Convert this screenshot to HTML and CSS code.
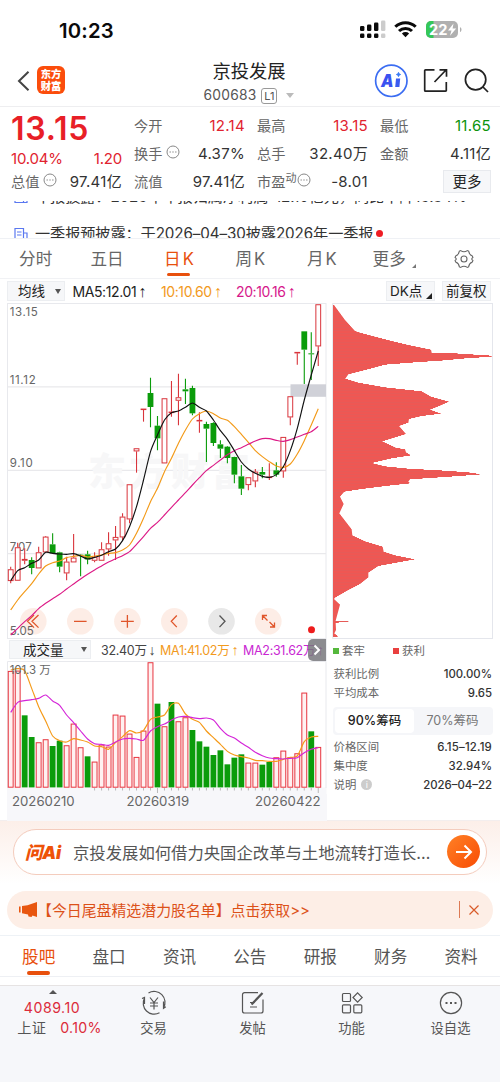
FILE: index.html
```html
<!DOCTYPE html>
<html lang="zh-CN">
<head>
<meta charset="utf-8">
<title>京投发展 600683</title>
<link rel="stylesheet" href="styles.css">
</head>
<body>
<header class="status">
  <span class="clock">10:23</span>
  <svg class="status-icons" width="104" height="20" viewBox="358 19 104 20">
    <g fill="#0a0a0a"><rect x="360" y="26" width="4.4" height="5" rx="1.3"/><rect x="367" y="24.5" width="4.4" height="6.5" rx="1.3"/><rect x="374" y="22.5" width="4.4" height="8.5" rx="1.3"/><rect x="360" y="33.5" width="4.4" height="4.6" rx="1.3"/><rect x="367" y="33.5" width="4.4" height="4.6" rx="1.3"/><rect x="374" y="33.5" width="4.4" height="4.6" rx="1.3"/></g>
    <g fill="#ccc"><rect x="381" y="20.5" width="4.4" height="10.5" rx="1.3"/><rect x="381" y="33.5" width="4.4" height="4.6" rx="1.3"/></g>
    <g fill="none" stroke="#0a0a0a" stroke-width="3"><path d="M395.3 26.8a14.6 14.6 0 0 1 20.4 0"/><path d="M399 31a9.4 9.4 0 0 1 13 0"/></g>
    <path d="M405.5 37.2l-3.6-3.7a5.2 5.2 0 0 1 7.2 0z" fill="#0a0a0a"/>
    <path d="M431 21h22a5 5 0 0 1 5 5v7a5 5 0 0 1-5 5h-22a5 5 0 0 1-5-5v-7a5 5 0 0 1 5-5z" fill="#b0b0b0"/>
    <path d="M431 21h2.5v17H431a5 5 0 0 1-5-5v-7a5 5 0 0 1 5-5z" fill="#34c759"/>
    <path d="M460 27.2c2 .7 2 4 0 4.8z" fill="#b0b0b0"/>
    <text x="429" y="34.8" class="battery-text" textLength="18.500" lengthAdjust="spacingAndGlyphs">22</text>
    <path d="M453.5 23.5l-5.5 7h3.5l-1.5 5.3 6.2-7.4h-3.6z" fill="#fff"/>
  </svg>
</header>

<nav class="nav">
  <svg class="back" width="14" height="22" viewBox="0 0 14 22"><path d="M11.5 1.8L2 11l9.500 9.200" fill="none" stroke="#444" stroke-width="2"/></svg>
  <div class="brand"><span>东方</span><span>财富</span></div>
  <div class="title">
    <h1>京投发展</h1>
    <div class="code"><span>600683</span><b>L1</b><i></i></div>
  </div>
  <svg class="nav-icons" width="120" height="40" viewBox="372 61 120 40">
    <circle cx="391.300" cy="80.800" r="15.700" fill="#fff" stroke="#3b6df2" stroke-width="1.700"/>
    <text x="381" y="87" class="ai-text" textLength="12.500" lengthAdjust="spacingAndGlyphs">A</text>
    <path d="M396 78.500h4.200l-.8 8.500h-4.200z" fill="#3a5cf0"/>
    <path d="M398.500 72.300l.7 1.500 1.500.7-1.500.7-.7 1.500-.7-1.500-1.500-.7 1.500-.7z" fill="#3a7cf6" stroke="#3a7cf6" stroke-width=".8"/>
    <g fill="none" stroke="#222" stroke-width="1.700"><path d="M434.500 69.800h-9a.8.8 0 0 0-.8.8v19.800a.8.8 0 0 0 .8.800h20a.8.8 0 0 0 .8-.8V82M434.500 82l11.500-12M439.500 69.800h7v7"/>
    <circle cx="475.600" cy="79.600" r="10.200"/><path d="M483 87l5 5"/></g>
  </svg>
</nav>

<section class="quote">
  <div class="col">
    <div class="price">13.15</div>
    <div class="row change up"><span>10.04%</span><span>1.20</span></div>
    <div class="row"><label>总值<svg class="dots" viewBox="0 0 14 14"><circle cx="7" cy="7" r="6"/><path d="M3.500 7h1.400M6.300 7h1.400M9.100 7h1.400"/></svg></label><span class="amount">97.41亿</span></div>
  </div>
  <div class="col">
    <div class="row"><label>今开</label><span class="up">12.14</span></div>
    <div class="row"><label>换手<svg class="dots" viewBox="0 0 14 14"><circle cx="7" cy="7" r="6"/><path d="M3.500 7h1.400M6.300 7h1.400M9.100 7h1.400"/></svg></label><span>4.37%</span></div>
    <div class="row"><label>流值</label><span class="amount">97.41亿</span></div>
  </div>
  <div class="col">
    <div class="row"><label>最高</label><span class="up">13.15</span></div>
    <div class="row"><label>总手</label><span class="amount">32.40万</span></div>
    <div class="row"><label>市盈<sup>动</sup><svg class="dots tight" viewBox="0 0 14 14"><circle cx="7" cy="7" r="6"/><path d="M3.500 7h1.400M6.300 7h1.400M9.100 7h1.400"/></svg></label><span>-8.01</span></div>
  </div>
  <div class="col">
    <div class="row"><label>最低</label><span class="down">11.65</span></div>
    <div class="row"><label>金额</label><span class="amount">4.11亿</span></div>
    <div class="row end"><button class="more">更多</button></div>
  </div>
</section>

<section class="news">
  <div class="news-track">
    <div class="news-item"><svg width="14" height="14" viewBox="0 0 14 14"><path d="M1 1.500h8.500v11H1zM9.500 6H13v6.500H1M3 5h4.500M3 8h4.500"/></svg><span>年报披露：2025年年报归属净利润-12.10亿元，同比下降15.34%</span></div>
    <div class="news-item"><svg width="14" height="14" viewBox="0 0 14 14"><path d="M1 1.500h8.500v11H1zM9.500 6H13v6.500H1M3 5h4.500M3 8h4.500"/></svg><span>一季报预披露：于2026–04–30披露2026年一季报</span><i></i></div>
  </div>
</section>

<nav class="periods">
  <span>分时</span><span>五日</span><span class="k on">日K</span><span class="k">周K</span><span class="k">月K</span><span class="drop">更多</span>
  <span><svg width="20" height="20" viewBox="0 0 20 20"><path d="M6.700 1.600Q10 3.900 13.300 1.600L14.600 2.100Q15.100 5.700 18.300 6.900L18.900 8.500Q16.600 10 18.900 11.500L18.300 13.100Q15.100 14.300 14.600 17.900L13.300 18.400Q10 16.100 6.700 18.400L5.400 17.900Q4.900 14.300 1.700 13.100L1.100 11.500Q3.400 10 1.100 8.500L1.700 6.900Q4.900 5.700 5.400 2.100Z"/><circle cx="10" cy="10" r="3"/></svg></span>
</nav>

<div class="indicators">
  <span class="select ma">均线<i></i></span>
  <span class="v5">MA5:12.01<em>↑</em></span><span class="v10">10:10.60<em>↑</em></span><span class="v20">20:10.16<em>↑</em></span>
  <span class="chip dk">DK点<i></i></span><span class="chip">前复权</span>
</div>

<main class="charts">
  <div class="left">
    <svg id="kline" width="320" height="337" viewBox="7 302 320 337">
      <rect x="7.500" y="303.500" width="318.500" height="335" fill="#fff" stroke="#e8e9ed"/>
      <path d="M8 386.800h318M8 470.300h318M8 553.700h318" stroke="#e9e9ec" stroke-width="1.200"/>
      <text x="88" y="485" class="watermark" textLength="162">东方财富</text>
      <rect x="290.500" y="384.300" width="35.500" height="12.500" fill="#d0d1d8"/>
      <g fill="#fdeae2" fill-opacity=".85"><circle cx="33.300" cy="621.300" r="13.300"/><circle cx="80.300" cy="621.300" r="13.300"/><circle cx="127.400" cy="621.300" r="13.300"/><circle cx="174.300" cy="621.300" r="13.300"/><circle cx="268.300" cy="621.300" r="13.300"/></g>
      <circle cx="221.500" cy="621.300" r="13.300" fill="#e8e8e8"/>
      <g class="axis"><text x="9.700" y="316" textLength="28">13.15</text><text x="9.700" y="383.500" textLength="26">11.12</text><text x="9.700" y="467" textLength="23">9.10</text><text x="9.700" y="551" textLength="22">7.07</text><text x="9.700" y="634.500" textLength="24">5.05</text></g>
      <g id="candles"></g>
      <g fill="none" stroke="#e0562b" stroke-width="1.300"><path d="M34 615l-6.500 6.300 6.500 6.300M38.500 615l-6.500 6.300 6.500 6.300M74 621.300h12.600M121 621.300h12.800M127.400 615v12.800M176.800 615.500l-5.500 5.800 5.500 5.800M262.500 620v-4.500h4.500M262.500 615.500l5 5M274.500 622.500v4.500H270M274.500 627l-5-5"/></g>
      <path d="M219.500 615.500l5.500 5.800-5.500 5.800" fill="none" stroke="#555" stroke-width="1.300"/>
      <g id="averages"></g>
      <circle cx="311.500" cy="629.700" r="3.500" fill="#ee1c1c"/>
    </svg>
    <div class="volume-head">
      <span class="select vol">成交量<i></i></span><span class="now">32.40万<em>↓</em></span><span class="m1">MA1:41.02万<em>↑</em></span><span class="m2">MA2:31.62万<em>↑</em></span>
      <b class="handle"><svg width="8" height="12" viewBox="0 0 8 12"><path d="M1.500 1.500L6 6l-4.500 4.500" fill="none" stroke="#fff" stroke-width="2"/></svg></b>
    </div>
    <svg id="volume" width="320" height="133" viewBox="7 661 320 133">
      <rect x="7" y="787.500" width="319.500" height="8" fill="#f7f7fa"/>
      <path d="M7.500 788V661.500H326V788" fill="none" stroke="#e8e9ed"/>
      <g id="bars"></g>
      <g class="axis"><text x="9.700" y="673.500" textLength="41">101.3 万</text></g>
    </svg>
    <div class="dates"><span>20260210</span><span>20260319</span><span>20260422</span></div>
  </div>
  <aside class="right">
    <svg id="profile" width="161" height="337" viewBox="332 302 161 337"><rect x="332.700" y="303.500" width="159.800" height="335" fill="#fff" stroke="#e4e6ec"/></svg>
    <div class="legend"><span class="g">套牢</span><span class="r">获利</span></div>
    <dl class="stats"><dt>获利比例</dt><dd>100.00%</dd><dt>平均成本</dt><dd>9.65</dd></dl>
    <div class="switch"><span class="on">90%筹码</span><span>70%筹码</span></div>
    <dl class="stats low"><dt>价格区间</dt><dd class="range">6.15–12.19</dd><dt>集中度</dt><dd>32.94%</dd><dt>说明<i>i</i></dt><dd>2026–04–22</dd></dl>
  </aside>
</main>

<section class="ask">
  <div class="ask-pill">
    <span class="ask-logo">问Ai</span><span class="ask-text">京投发展如何借力央国企改革与土地流转打造长…</span>
    <b><svg width="18" height="16" viewBox="0 0 18 16"><path d="M1 8h14.500M9.500 1.500L16 8l-6.500 6.500" fill="none" stroke="#fff" stroke-width="2"/></svg></b>
  </div>
</section>
<div class="promo">
  <svg width="19" height="16" viewBox="0 0 19 16" fill="#e8560f"><path d="M0 4.500h1.600v6H0zM3 4l5.500-.8L18 0v15l-4.500-1.500-1 1.500-3-.5-.5-2L3 11.300z"/></svg>
  <span>【今日尾盘精选潜力股名单】点击获取&gt;&gt;</span>
  <i></i>
  <svg class="close" width="10" height="10" viewBox="0 0 10 10"><path d="M.5.5l9 9M9.500.5l-9 9" stroke="#d85a28" stroke-width="1.200"/></svg>
</div>

<nav class="sections"><span class="on">股吧</span><span>盘口</span><span>资讯</span><span>公告</span><span>研报</span><span>财务</span><span>资料</span></nav>

<footer class="tabbar">
  <div class="index"><i></i><span>4089.10</span><p><em>上证</em>0.10%</p></div>
  <div><svg viewBox="0 0 26 26"><path d="M7.500 2.900A11 11 0 0 1 22.500 18M18.500 22.800A11 11 0 0 1 3.500 8M3.500 14V7.500L1 8.500M22.500 11.500v6.800l2.300-1.500M9 7.500l4 5 4-5M13 12.500v7M9 13h8M9 16h8"/></svg><span>交易</span></div>
  <div><svg viewBox="0 0 26 26"><path d="M18 2.700H4.500a2 2 0 0 0-2 2V21a2 2 0 0 0 2 2H21a2 2 0 0 0 2-2V9.500M10 12.500h4.500M10 17h7"/><path d="M11.500 14.500L22.500 3" stroke-width="2.300"/></svg><span>发帖</span></div>
  <div><svg viewBox="0 0 26 26"><rect x="3.500" y="3.500" width="8" height="8" rx="1"/><rect x="3.500" y="14.800" width="8" height="8" rx="1"/><rect x="14.800" y="14.800" width="8" height="8" rx="1"/><path d="M18.600 2.800l4.600 4.700-4.600 4.700L14 7.500z"/></svg><span>功能</span></div>
  <div><svg viewBox="0 0 26 26"><circle cx="13" cy="13" r="10.600"/><path d="M7.500 13h2M12 13h2M16.500 13h2" stroke-width="2"/></svg><span>设自选</span></div>
</footer>
<script src="charts.js"></script>
</body>
</html>
```
FILE: styles.css
```css
* { box-sizing: border-box; }
body { margin: 0; width: 500px; height: 1082px; overflow: hidden; background: #fff; color: #333; font-family: Inter, "Noto Sans CJK SC", sans-serif; }
h1, p, dl, dd { margin: 0; }
i, em { font-style: normal; }
svg { display: block; flex: none; }
span, label { white-space: nowrap; }
.up { color: #e1232f; }
.down { color: #0c930c; }

.status { height: 60px; display: flex; justify-content: space-between; padding: 19px 38px 0 59px; }
.clock { font-size: 20.300px; font-weight: 600; line-height: 23px; color: #0a0a0a; letter-spacing: .2px; }
.battery-text { font: 700 14.500px Inter, sans-serif; fill: #fff; }

.nav { height: 47px; border-bottom: 1.500px solid #eeeef0; display: flex; padding-left: 17px; }
.back { margin-top: 10px; }
.brand { width: 28px; height: 28px; margin: 6px 0 0 6px; border-radius: 6px; background: #fb4d0c; color: #fff; font: 900 10.300px/12px "Noto Sans CJK SC", sans-serif; display: flex; flex-direction: column; align-items: center; justify-content: center; }
.title { width: 140px; margin-left: 114px; text-align: center; }
.title h1 { font-size: 18.300px; font-weight: 400; line-height: 22px; color: #222; }
.code { display: flex; align-items: center; justify-content: center; margin-top: 5px; font-size: 13.800px; line-height: 17px; color: #555; letter-spacing: .2px; }
.code b { width: 16px; height: 16px; margin-left: 5px; border: 1px solid #999; border-radius: 3px; font-size: 11px; line-height: 14px; font-weight: 400; letter-spacing: 0; }
.code i { margin-left: 9px; border: 4px solid transparent; border-top: 5px solid #bbb; border-bottom: 0; }
.nav-icons { margin-left: 53px; margin-top: 1px; }
.ai-text { font: italic 900 17px "Inter", sans-serif; fill: #3a52f0; }

.quote { height: 93px; display: grid; grid-template-columns: repeat(4, 111px); column-gap: 12px; padding: 5px 0 0 11px; }
.row { display: flex; justify-content: space-between; height: 28px; align-items: center; font-size: 15px; letter-spacing: .3px; line-height: 20px; white-space: nowrap; }
.row label { font-size: 14.200px; color: #666; display: flex; align-items: center; letter-spacing: 0; }
.price { height: 33px; font-size: 32px; font-weight: 600; line-height: 33px; color: #e81f27; letter-spacing: .8px; }
.change { height: 23px; padding-top: 4px; letter-spacing: -.2px; }
.dots { width: 14px; height: 14px; margin: -5px 0 0 4px; fill: none; stroke: #888; }
.dots.tight { margin-left: 1px; }
.row sup { font-size: 11px; margin-top: -9px; line-height: 12px; vertical-align: baseline; }
.more { width: 48px; height: 23px; padding: 0; border: 1px solid #e8eaee; background: #f6f7f9; font: 14.500px/20px "Noto Sans CJK SC", sans-serif; color: #222; }
.row.end { justify-content: flex-end; margin-top: -1px; }

.news { height: 38.500px; overflow: hidden; border-bottom: 1px solid #eff1f5; padding-top: 1px; }
.news-track { overflow: hidden; height: 37px; }
.news-item { height: 31px; margin-top: -20px; display: flex; align-items: center; padding-left: 14px; font-size: 15.200px; line-height: 22px; color: #333; letter-spacing: -.1px; }
.news-item + .news-item { margin-top: 5px; padding-top: 2px; }
.news-item svg { fill: none; stroke: #5a78f0; stroke-width: 1.200; margin-right: 7px; }
.news-item i { width: 7px; height: 7px; border-radius: 50%; background: #ee1c24; margin-left: 3px; }

.periods { height: 40.500px; display: grid; grid-template-columns: repeat(7, 71.400px); border-bottom: 1px solid #f1f2f5; }
.periods span { position: relative; font-size: 16.600px; line-height: 41px; height: 39.500px; text-align: center; color: #666; }
.periods .k { letter-spacing: 2px; padding-left: 3px; }
.periods .on { color: #e8500d; }
.periods .on::after, .sections .on::after { content: ""; position: absolute; left: 50%; margin-left: -11.500px; bottom: 2px; width: 23px; height: 3.500px; border-radius: 2px; background: #e8500d; }
.periods .drop { padding-right: 7px; }
.periods .drop::after { content: ""; position: absolute; right: 12px; bottom: 10px; border: 2.500px solid transparent; border-right-color: #777; border-bottom-color: #777; }
.periods svg { margin: 10px auto 0; fill: none; stroke: #666; stroke-width: 1.100; }

.indicators { height: 22px; padding: 2px 9px 0 7px; display: flex; align-items: center; font-size: 14px; letter-spacing: -.4px; }
.indicators em, .volume-head em { font-family: "Liberation Sans", sans-serif; font-size: 1.15em; line-height: 1; margin-left: 2px; }
.select, .chip { height: 20px; border: 1px solid #eceef1; background: #f6f7f9; color: #222; font-size: 13.500px; line-height: 18px; display: flex; align-items: center; letter-spacing: 0; }
.select i { border: 3px solid transparent; border-top: 5px solid #555; border-bottom: 0; margin-left: auto; }
.ma { width: 58px; padding: 0 3px 0 10px; }
.v5 { margin-left: 7.500px; width: 88.500px; color: #222; }
.v10 { width: 75px; color: #f29a1d; }
.v20 { color: #d6188b; }
.dk { margin-left: auto; margin-right: 7px; padding: 0 1px 0 3px; width: 49px; }
.dk i { align-self: flex-end; margin: 0 1px 1px auto; border: 3px solid transparent; border-right-color: #222; border-bottom-color: #222; }
.chip:last-child { width: 49px; padding-left: 3px; }

.charts { display: flex; height: 518px; margin-top: .5px; }
.left { width: 319.500px; margin-left: 7px; }
.left > svg { width: 320px; }
.axis text { font: 11.500px Inter, "Noto Sans CJK SC", sans-serif; fill: #666; }
.watermark { font: 900 38px "Noto Sans CJK SC", sans-serif; fill: #f7f7f8; }
.volume-head { height: 22px; display: flex; align-items: center; font-size: 12.500px; letter-spacing: -.3px; padding-left: 2px; position: relative; border-right: 1px solid #eceef2; }
.vol { width: 82px; height: 19px; padding: 0 3px 0 13px; }
.now { margin-left: 10px; width: 59px; color: #444; }
.m1 { width: 83px; color: #f29a1d; }
.m2 { color: #c928d2; }
.handle { position: absolute; right: 0; top: 0; width: 18px; height: 22px; border-radius: 5px 0 0 5px; background: rgba(120,120,124,.85); display: flex; align-items: center; justify-content: center; }
.dates { height: 27px; background: #f7f7fa; display: flex; justify-content: space-between; padding: 0 6px 0 5px; font-size: 13.200px; line-height: 15px; color: #666; }
.dates span:nth-child(2) { margin-right: 14px; }
.right { width: 161px; margin-left: 5.500px; font-size: 11.400px; color: #666; }
.legend { display: flex; height: 23px; align-items: center; padding: 1px 0 0 1px; line-height: 18px; }
.legend span { width: 60px; display: flex; align-items: center; }
.legend span::before { content: ""; width: 6px; height: 6px; margin-right: 3px; background: #55b83c; }
.legend .r::before { background: #e9403f; }
.stats { display: grid; grid-template-columns: 1fr auto; grid-auto-rows: 19px; align-items: center; padding: 3px 1px 0 1.500px; line-height: 17px; height: 43px; }
.stats dd { font-weight: 500; color: #333; text-align: right; }
.stats .range { letter-spacing: .2px; }
.stats.low { padding-top: 3.500px; }
.stats i { display: inline-block; width: 11px; height: 11px; border-radius: 50%; background: #ccc; color: #fff; font-size: 9px; line-height: 11px; text-align: center; margin-left: 5px; vertical-align: 1px; }
.switch { height: 28px; margin: 2px 0 0 1px; border-radius: 4px; background: #f5f6f9; display: grid; grid-template-columns: 79px 1fr; padding: 2px; font-size: 12.500px; line-height: 24px; text-align: center; color: #777; }
.switch .on { background: #fff; color: #222; border-radius: 4px; font-weight: 500; }

.ask { height: 71px; border-top: 1.500px solid #f3eeee; padding: 8px 13px 0; background: linear-gradient(#fcefe9, #fff 90%); }
.ask-pill { height: 46.500px; border: 1.300px solid #f4ccbd; border-radius: 24px; background: #fff; display: flex; align-items: center; padding: 0 6px 0 11px; }
.ask-logo { width: 48px; font: italic 900 17.500px "Inter", "Noto Sans CJK SC", sans-serif; color: #ee5208; letter-spacing: -.2px; }
.ask-text { font-size: 16.350px; color: #555; }
.ask-pill b { margin-left: auto; width: 33px; height: 33px; border-radius: 50%; background: linear-gradient(135deg, #ff8126, #f84c04); display: flex; align-items: center; justify-content: center; }
.promo { height: 38px; margin: 0 7px; border-radius: 19px; background: #fdeee6; display: flex; align-items: center; padding: 0 14px 0 12px; font-size: 14.900px; color: #dc5119; }
.promo > span { margin-left: -1px; }
.promo i { width: 1px; height: 17px; background: #dd7a54; margin-left: auto; }
.promo .close { margin-left: 9px; }
.sections { height: 42px; margin-top: 6px; padding: 0 3.500px; border-top: 1px solid #eef2f6; border-bottom: 1px solid #eef0f4; display: grid; grid-template-columns: repeat(7, 70.400px); }
.sections span { position: relative; text-align: center; font-size: 16.600px; line-height: 42px; color: #555; height: 41px; }
.sections .on { color: #e8500d; }
.tabbar { height: 97px; margin-top: 8px; border-top: 1.500px solid #e6e3e3; background: #f6f7fa; display: grid; grid-template-columns: repeat(5, 99px); padding-left: 5px; color: #555; }
.tabbar div { display: flex; flex-direction: column; align-items: center; font-size: 13.300px; line-height: 18px; }
.tabbar svg { width: 26px; height: 26px; margin-top: 4.500px; margin-bottom: 3px; fill: none; stroke: #555; stroke-width: 1.200; }
.tabbar .index { font-size: 14.200px; color: #dc2b3b; letter-spacing: .3px; }
.index > i { border: 4px solid transparent; border-bottom: 4px solid #555; border-top: 0; margin: 4px 4px 4.500px 0; }
.index > span { margin-right: 5px; line-height: 19px; letter-spacing: .5px; }
.index p { line-height: 21px; margin-left: 10px; white-space: nowrap; }
.index em { color: #555; margin-right: 14px; }
```
FILE: charts.js
```js
const NS = 'http://www.w3.org/2000/svg';
const add = (id, tag, attrs) => {
  const el = document.createElementNS(NS, tag);
  for (const k in attrs) el.setAttribute(k, attrs[k]);
  document.getElementById(id).appendChild(el);
};
const x = i => 10.7 + i * 6.99;
const RED = '#d9353c', GREEN = '#0b9c0b';

// [kind, high, bodyTop, bodyBottom, low] in thirds of a pixel below the chart top
const candles = [
['r',800,808,843,850],['r',728,742,842,842],['r',745,777,782,793],['g',772,780,804,823],['r',740,757,805,805],['r',708,710,757,757],['g',700,733,760,760],['g',755,757,800,817],['r',770,785,820,841],['r',702,773,787,787],['g',763,764,767,829],['g',752,763,778,793],['r',757,771,782,787],['r',727,748,782,782],['r',697,730,748,767],['r',678,711,721,780],['r',640,650,712,720],['r',553,553,658,670],['r',445,445,454,518],['r',326,326,329,365],['g',233,279,321,382],['g',348,377,415,451],['r',295,295,490,490],['r',243,335,339,350],['r',221,292,302,376],['g',236,268,274,312],['g',257,264,340,346],['r',337,360,364,398],['g',365,372,386,486],['g',367,369,429,438],['g',421,433,446,474],['g',438,440,474,490],['g',470,471,524,550],['g',495,529,566,585],['r',532,532,555,571],['r',507,515,544,562],['g',501,516,524,535],['r',490,530,534,540],['g',487,511,524,530],['r',411,411,514,533],['r',289,289,352,376],['r',156,156,160,194],['g',94,94,149,252],['g',97,160,163,240],['r',13,13,139,198]];
const py = v => 300 + v / 3;
candles.forEach(([k, h, t, b, l], i) => {
  const cx = x(i), color = k === 'r' ? RED : GREEN;
  add('candles', 'path', { d: `M${cx} ${py(h)}V${py(t)}M${cx} ${py(b)}V${py(l)}`, stroke: color, 'stroke-width': 1.1 });
  add('candles', 'rect', k === 'r'
    ? { x: cx - 2.4, y: py(t) + .4, width: 4.8, height: Math.max(.5, (b - t) / 3 - .8), fill: '#fff', stroke: RED, 'stroke-width': 1 }
    : { x: cx - 2.9, y: py(t), width: 5.8, height: Math.max(1, (b - t) / 3), fill: GREEN });
});

const line = (id, values, y, stroke) => {
  const p = values.map((v, i) => [x(i), y(v)]);
  let d = `M${p[0]}`;
  for (let i = 1; i < p.length; i++) {
    const a = p[Math.max(0, i - 2)], b = p[i - 1], c = p[i], e = p[Math.min(p.length - 1, i + 1)];
    d += `C${b[0] + (c[0] - a[0]) / 8} ${b[1] + (c[1] - a[1]) / 8} ${c[0] - (e[0] - b[0]) / 8} ${c[1] - (e[1] - b[1]) / 8} ${c}`;
  }
  add(id, 'path', { d, stroke, fill: 'none', 'stroke-width': 1.15 });
};
line('averages', [930,900,875,851,822,798,788,783,773,769,766,771,768,765,760,758,750,735,700,655,605,565,515,475,430,390,357,341,333,341,354,361,380,403,427,452,470,485,498,502,492,462,422,375,326], py, '#f39a18');
line('averages', [1005,985,965,947,926,910,896,883,867,852,837,823,810,798,786,776,767,755,733,710,685,667,645,622,600,578,555,533,512,496,480,464,452,443,433,423,416,416,421,424,419,411,403,395,379], py, '#dc1a86');
line('averages', [842,812,803,790,780,757,760,762,763,761,768,777,772,766,755,747,722,680,620,540,455,405,360,338,333,322,309,322,333,360,392,418,452,486,507,520,529,532,524,500,452,385,300,225,153], py, '#111');

const vy = v => 640 + v / 3;
const volumes = [93,92,226,291,307,298,318,302,316,251,322,349,365,314,320,224,227,281,351,272,67,191,259,186,244,232,270,304,320,345,331,373,353,343,368,368,374,366,352,332,352,340,158,274,321];
const falling = new Set([2,3,6,7,11,21,23,26,27,28,29,30,31,32,33,36,37,43]);
volumes.forEach((v, i) => {
  const down = falling.has(i), o = down ? 2.9 : 2.45;
  add('bars', 'rect', { x: x(i) - o, y: vy(v) + (down ? 0 : .4), width: o * 2, height: 787.4 - vy(v) - (down ? 0 : .6), fill: down ? GREEN : '#fff1f1', stroke: down ? 'none' : '#e7343e', 'stroke-width': 1 });
  if (i > 11) add('bars', 'path', { d: `M${x(i)} 788v${i === 21 || i === 44 ? 5 : 2.5}`, stroke: '#aaa', 'stroke-width': .8 });
});
line('bars', [90,86,92,145,200,243,288,302,306,296,300,306,318,320,328,308,290,272,279,271,238,231,225,194,190,222,238,247,273,293,313,334,345,350,354,361,362,364,364,358,352,348,305,291,289], vy, '#f59a18');
line('bars', [217,187,182,179,175,165,183,196,225,248,273,297,311,313,316,306,297,295,297,301,273,260,252,240,231,229,233,236,234,240,265,285,294,309,322,337,347,354,356,357,355,353,338,328,323], vy, '#d425d8');

// price distribution outline as [extent, level], filled row by row
const outline = [[27,15],[60,60],[90,93],[105,98],[150,110],[200,123],[250,135],[318,149],[320,158],[390,160],[500,167],[500,170],[410,176],[360,181],[270,187],[180,194],[140,205],[70,223],[61,236],[100,248],[180,262],[290,274],[318,290],[372,305],[345,317],[315,329],[348,341],[290,348],[252,357],[250,368],[222,378],[243,402],[172,424],[212,443],[240,448],[243,457],[258,466],[200,475],[140,489],[180,499],[250,506],[360,512],[430,517],[470,523],[430,526],[360,531],[255,538],[250,545],[256,550],[190,557],[110,567],[58,575],[45,590],[56,612],[43,640],[80,688],[82,706],[120,724],[173,740],[176,755],[210,766],[270,778],[220,787],[160,798],[130,818],[130,832],[105,852],[70,870],[30,893],[27,897],[45,914],[38,940],[32,962],[70,963],[70,966],[32,968],[33,990],[28,1000],[38,1008],[38,1011]];
for (let y = 305; y < 637; y++) {
  const t = (y + .5 - 300) * 3;
  let n = outline.findIndex(p => p[1] > t);
  if (n < 1) continue;
  const [x0, y0] = outline[n - 1], [x1, y1] = outline[n];
  const w = (x0 + (x1 - x0) * (t - y0) / (y1 - y0) - 24) / 3;
  add('profile', 'rect', { x: 333, y, width: w, height: 1, fill: y % 3 ? '#ef5753' : '#e65b58' });
}
```
